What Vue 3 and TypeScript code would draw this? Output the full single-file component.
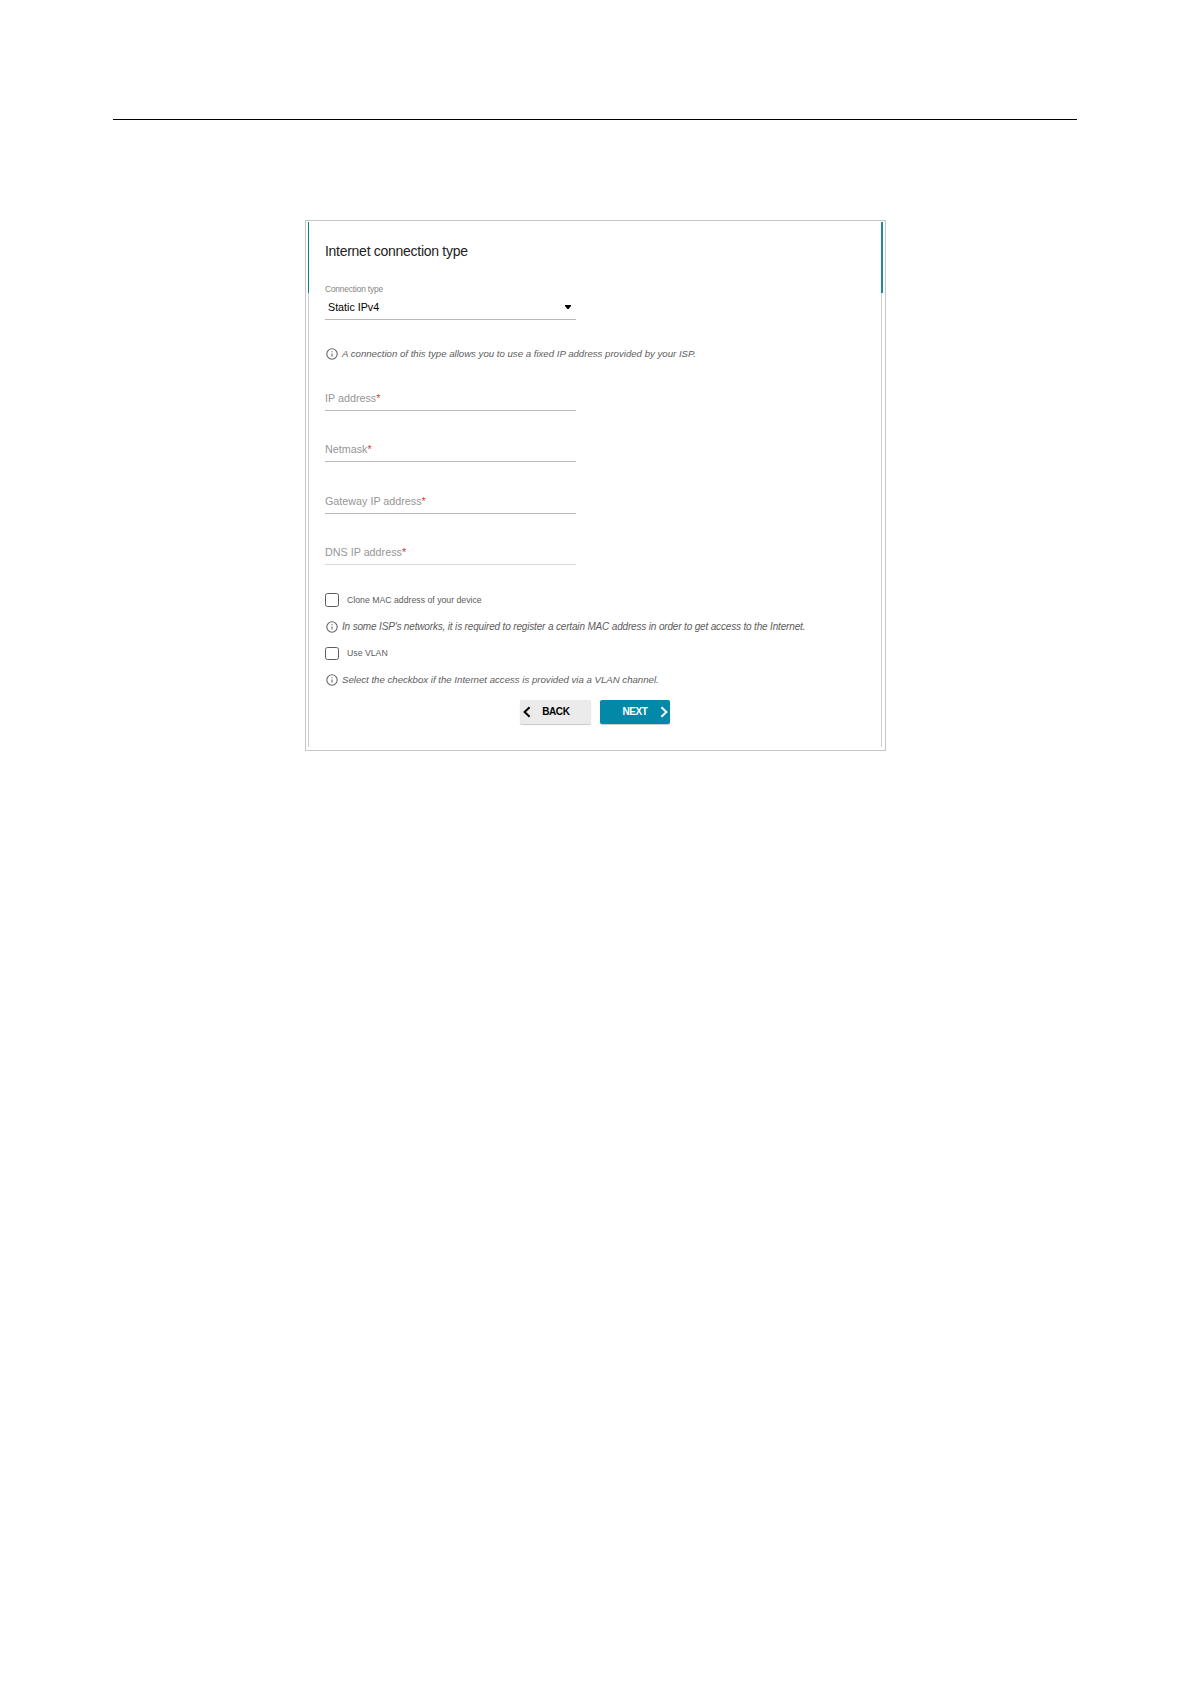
<script setup lang="ts">
import { ref } from 'vue'

interface Field {
  id: string
  label: string
}

const fields: Field[] = [
  { id: 'ip', label: 'IP address' },
  { id: 'mask', label: 'Netmask' },
  { id: 'gateway', label: 'Gateway IP address' },
  { id: 'dns', label: 'DNS IP address' },
]

const cloneMac = ref(false)
const useVlan = ref(false)
</script>

<template>
  <main class="page">
    <hr class="rule" />
    <section class="frame">
      <div class="card">
        <h1 class="title">Internet connection type</h1>

        <div class="label">Connection type</div>
        <div class="select">
          <span>Static IPv4</span>
          <svg class="caret" width="6" height="4" viewBox="0 0 6 4"><path d="M0 0h6v1L3.6 4H2.4L0 1z" fill="#000" /></svg>
        </div>

        <p class="info info-type">
          <svg class="icon" viewBox="0 0 12 12"><circle cx="6" cy="6" r="5.2" /><path d="M6 5.4v3.2M6 3.2v1.1" /></svg>
          <span>A connection of this type allows you to use a fixed IP address provided by your ISP.</span>
        </p>

        <div v-for="f in fields" :key="f.id" class="field" :class="f.id">{{ f.label }}<b class="star">*</b></div>

        <div class="check check-mac" @click="cloneMac = !cloneMac">
          <span class="box"></span>
          <span>Clone MAC address of your device</span>
        </div>
        <p class="info info-mac">
          <svg class="icon" viewBox="0 0 12 12"><circle cx="6" cy="6" r="5.2" /><path d="M6 5.4v3.2M6 3.2v1.1" /></svg>
          <span>In some ISP's networks, it is required to register a certain MAC address in order to get access to the Internet.</span>
        </p>
        <div class="check check-vlan" @click="useVlan = !useVlan">
          <span class="box"></span>
          <span>Use VLAN</span>
        </div>
        <p class="info info-vlan">
          <svg class="icon" viewBox="0 0 12 12"><circle cx="6" cy="6" r="5.2" /><path d="M6 5.4v3.2M6 3.2v1.1" /></svg>
          <span>Select the checkbox if the Internet access is provided via a VLAN channel.</span>
        </p>

        <div class="actions">
          <button class="btn back">
            <svg width="8" height="12" viewBox="0 0 8 12"><path d="M6.6 1.2L1.6 6l5 4.8" /></svg>
            <span>BACK</span>
          </button>
          <button class="btn next">
            <span>NEXT</span>
            <svg width="8" height="12" viewBox="0 0 8 12"><path d="M1.4 1.2L6.4 6l-5 4.8" /></svg>
          </button>
        </div>
      </div>
    </section>
  </main>
</template>

<style>
body {
  background: #fff;
}
</style>

<style scoped>
.page {
  box-sizing: border-box;
  width: 1190px;
  height: 1684px;
  padding-top: 119px;
  overflow: hidden;
  font-family: "Liberation Sans", Arial, sans-serif;
  color: #5c5c5c;
}
.rule {
  height: 1px;
  margin: 0 113px 100px;
  border: 0;
  background: #000;
}
.frame {
  box-sizing: border-box;
  width: 581px;
  height: 531px;
  margin-left: 305px;
  padding: 1px 2px 3px;
  border: 1px solid #c6c6c6;
}
.card {
  box-sizing: border-box;
  width: 575px;
  height: 525px;
  padding: 19px 0 0 17px;
  background:
    linear-gradient(#0c8190, #0c8190) 0 0 / 1px 71px no-repeat,
    linear-gradient(#2089a0, #2089a0) 573px 0 / 2px 71px no-repeat,
    linear-gradient(#cdcdcd, #cdcdcd) 0 0 / 1px 100% no-repeat,
    linear-gradient(#cdcdcd, #cdcdcd) 573px 0 / 1px 100% no-repeat;
}
.title {
  margin: 0;
  font-size: 14px;
  font-weight: 400;
  line-height: 20px;
  letter-spacing: -0.28px;
  color: #222;
}
.label {
  margin-top: 22px;
  font-size: 8.4px;
  line-height: 13px;
  letter-spacing: -0.17px;
  color: #858585;
}
.select {
  display: flex;
  align-items: center;
  justify-content: space-between;
  width: 251px;
  box-sizing: border-box;
  padding: 2px 5px 3px 3px;
  border-bottom: 1px solid #b9b9b9;
  font-size: 10.7px;
  line-height: 18px;
  color: #000;
}
.info {
  display: flex;
  align-items: center;
  height: 14px;
  margin: 0;
  padding-left: 1px;
  font-size: 9.63px;
  font-style: italic;
  line-height: 14px;
  white-space: nowrap;
}
.icon {
  width: 12px;
  height: 12px;
  margin-right: 4px;
  fill: none;
  stroke: #666;
  stroke-width: 1.1;
}
.info-type { margin-top: 27px; }
.info-mac {
  margin-top: 13px;
  font-size: 10px;
  letter-spacing: -0.163px;
}
.info-vlan { margin-top: 13px; }
.field {
  box-sizing: border-box;
  width: 251px;
  height: 22px;
  margin-top: 29px;
  border-bottom: 1px solid #b9b9b9;
  font-size: 10.75px;
  line-height: 18px;
  color: #969696;
}
.field.ip { margin-top: 28px; }
.field.gateway { margin-top: 30px; }
.field.dns { border-color: #dadada; }
.star {
  font-weight: 400;
  color: #d2452f;
}
.check {
  display: flex;
  align-items: center;
  gap: 8px;
  font-size: 8.72px;
  line-height: 14px;
}
.check-mac { margin-top: 28px; }
.check-vlan { margin-top: 13px; height: 13px; }
.check-vlan span { line-height: 13px; }
.box {
  box-sizing: border-box;
  width: 14px;
  height: 14px;
  border: 1.5px solid #5d5d5d;
  border-radius: 2.5px;
}
.check-vlan .box { height: 13px; }
.actions {
  display: flex;
  gap: 9px;
  margin: 13px 0 0 195px;
}
.btn {
  display: flex;
  align-items: center;
  justify-content: space-between;
  box-sizing: border-box;
  height: 24px;
  border: 0;
  border-radius: 2px;
  font: 700 10px/24px "Liberation Sans", Arial, sans-serif;
  letter-spacing: -0.4px;
  box-shadow: 0 1px 1px rgba(0, 0, 0, 0.22);
}
.btn svg {
  fill: none;
  stroke: currentColor;
  stroke-width: 2;
}
.back {
  width: 71px;
  padding: 0 21.5px 0 2.5px;
  background: #ebebeb;
  color: #000;
}
.next {
  width: 70px;
  padding: 0 2px 0 22.5px;
  background: #0488aa;
  color: #fff;
}
</style>
